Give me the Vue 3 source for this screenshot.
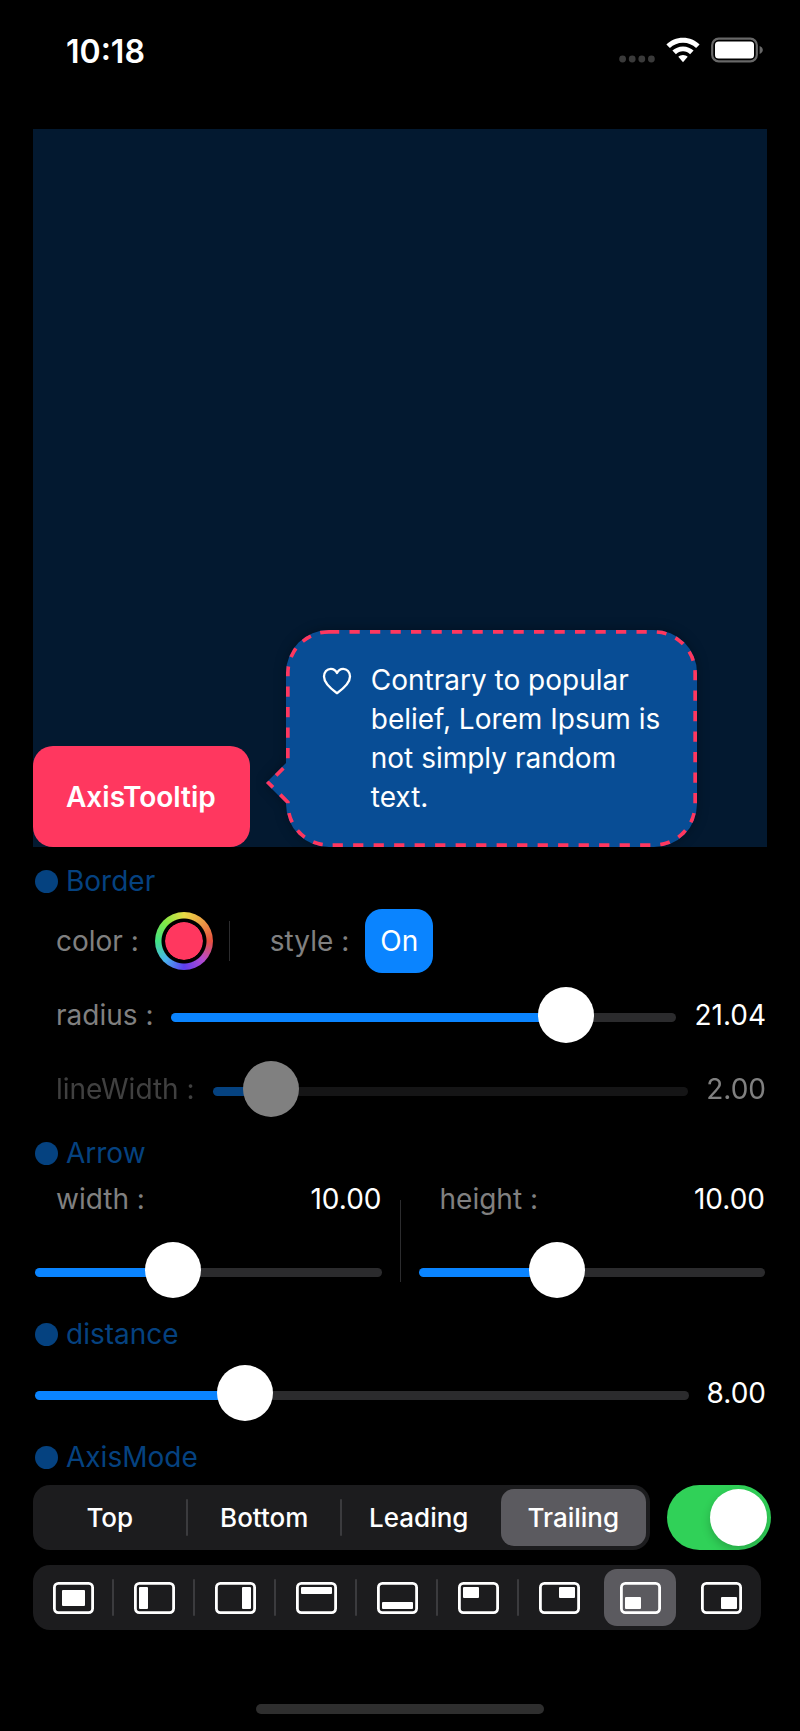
<script setup>
import { reactive, ref } from 'vue'

const border = reactive({ color: '#ff375f', styled: true })

const sliders = reactive({
  radius: { value: 21.04, min: 0, max: 25.8 },
  lineWidth: { value: 2, min: 1, max: 15 },
  width: { value: 10, min: 0, max: 26.4 },
  height: { value: 10, min: 0, max: 26.4 },
  distance: { value: 8, min: 0, max: 26.2 },
})

const ratio = (s) => ({ '--ratio': (s.value - s.min) / (s.max - s.min) })
const fixed = (s) => Number(s.value).toFixed(2)

const sides = ['Top', 'Bottom', 'Leading', 'Trailing']
const side = ref('Trailing')
const axisEnabled = ref(true)

const places = [
  { name: 'center', x: 9, y: 8, w: 23, h: 16 },
  { name: 'left', x: 5, y: 5, w: 9, h: 22 },
  { name: 'right', x: 27, y: 5, w: 9, h: 22 },
  { name: 'top', x: 5, y: 5, w: 31, h: 7 },
  { name: 'bottom', x: 5, y: 20, w: 31, h: 7 },
  { name: 'top left', x: 5, y: 5, w: 16, h: 11 },
  { name: 'top right', x: 20, y: 5, w: 16, h: 11 },
  { name: 'bottom left', x: 5, y: 15, w: 16, h: 12 },
  { name: 'bottom right', x: 20, y: 15, w: 16, h: 12 },
]
const place = ref('bottom left')

// Dividers next to the selected segment are hidden.
const dividerShown = (list, index, selected) =>
  list[index] !== selected && list[index - 1] !== selected
const placeNames = places.map((p) => p.name)
</script>

<template>
  <div class="screen">
    <header class="status">
      <time class="clock">10:18</time>
      <div class="indicators">
        <svg class="dots" width="36" height="8" viewBox="0 0 36 8" aria-hidden="true">
          <circle v-for="n in 4" :key="n" :cx="n * 9.6 - 6" cy="4" r="3.4" />
        </svg>
        <svg width="34" height="26" viewBox="0 0 34 26" aria-hidden="true">
          <path d="M17 0.8C23.6 0.8 29.4 3.3 33.6 7.5L30.1 11.1C26.7 7.8 22.1 5.8 17 5.8S7.3 7.8 3.9 11.1L0.4 7.5C4.6 3.3 10.4 0.8 17 0.8Z" fill="#fff" />
          <path d="M17 9.4C21.2 9.4 24.9 11 27.6 13.6L24.1 17.2C22.3 15.4 19.8 14.3 17 14.3S11.7 15.4 9.9 17.2L6.4 13.6C9.1 11 12.8 9.4 17 9.4Z" fill="#fff" />
          <path d="M17 17.9C18.8 17.9 20.5 18.6 21.7 19.8L17 25.2L12.3 19.8C13.5 18.6 15.2 17.9 17 17.9Z" fill="#fff" />
        </svg>
        <svg width="52" height="26" viewBox="0 0 52 26" aria-hidden="true">
          <rect x="1.2" y="1.7" width="44.6" height="22.6" rx="6.5" fill="none" stroke="#686868" stroke-width="2.2" />
          <rect x="4" y="4.5" width="39" height="17" rx="3.5" fill="#fff" />
          <path d="M48.6 9C50.6 9.8 51.8 11.2 51.8 13S50.6 16.2 48.6 17Z" fill="#686868" />
        </svg>
      </div>
    </header>

    <main class="content">
      <section class="stage">
        <button class="anchor" type="button">AxisTooltip</button>
        <div class="tooltip" role="tooltip">
          <svg class="bubble" viewBox="0 0 431 217" preserveAspectRatio="none" aria-hidden="true">
            <defs>
              <clipPath id="bubble-shape">
                <path d="M63 0H388A43 43 0 0 1 431 43V174A43 43 0 0 1 388 217H63A43 43 0 0 1 20 174V173L0 153L20 133V43A43 43 0 0 1 63 0Z" />
              </clipPath>
            </defs>
            <g clip-path="url(#bubble-shape)">
              <rect width="431" height="217" fill="#084d95" />
              <path
                v-if="border.styled"
                d="M63 0H388A43 43 0 0 1 431 43V174A43 43 0 0 1 388 217H63A43 43 0 0 1 20 174V173L0 153L20 133V43A43 43 0 0 1 63 0"
                fill="none"
                :stroke="border.color"
                stroke-width="7.4"
                stroke-dasharray="10.25 10.25"
              />
            </g>
          </svg>
          <svg class="heart" width="32" height="30" viewBox="0 0 32 30" aria-hidden="true">
            <path d="M16 27.2C10 23 3 17.4 3 10.6C3 6 6 2.8 9.8 2.8C12.6 2.8 14.8 4.4 16 7C17.2 4.4 19.4 2.8 22.2 2.8C26 2.8 29 6 29 10.6C29 17.4 22 23 16 27.2Z" fill="none" stroke="#fff" stroke-width="2.3" stroke-linejoin="round" />
          </svg>
          <p class="message">Contrary to popular belief, Lorem Ipsum is not simply random text.</p>
        </div>
      </section>

      <section class="group">
        <h2 class="heading">Border</h2>
        <div class="row style-row">
          <label class="name" for="border-color">color :</label>
          <span class="well"><input id="border-color" v-model="border.color" type="color" /></span>
          <span class="rule"></span>
          <label class="name style-name" for="border-style">style :</label>
          <button id="border-style" class="on" type="button" @click="border.styled = !border.styled">
            {{ border.styled ? 'On' : 'Off' }}
          </button>
        </div>
        <div class="row radius-row">
          <label class="name" for="radius">radius :</label>
          <input id="radius" v-model="sliders.radius.value" class="slider" type="range" step="0.01" :min="sliders.radius.min" :max="sliders.radius.max" :style="ratio(sliders.radius)" />
          <output for="radius">{{ fixed(sliders.radius) }}</output>
        </div>
        <div class="row line-row">
          <label class="name" for="line-width">lineWidth :</label>
          <input id="line-width" v-model="sliders.lineWidth.value" disabled class="slider" type="range" step="0.01" :min="sliders.lineWidth.min" :max="sliders.lineWidth.max" :style="ratio(sliders.lineWidth)" />
          <output for="line-width">{{ fixed(sliders.lineWidth) }}</output>
        </div>
      </section>

      <section class="group">
        <h2 class="heading">Arrow</h2>
        <div class="pair">
          <div class="half">
            <div class="caption">
              <label class="name" for="arrow-width">width :</label>
              <output for="arrow-width">{{ fixed(sliders.width) }}</output>
            </div>
            <input id="arrow-width" v-model="sliders.width.value" class="slider" type="range" step="0.01" :min="sliders.width.min" :max="sliders.width.max" :style="ratio(sliders.width)" />
          </div>
          <span class="pair-rule"></span>
          <div class="half">
            <div class="caption">
              <label class="name" for="arrow-height">height :</label>
              <output for="arrow-height">{{ fixed(sliders.height) }}</output>
            </div>
            <input id="arrow-height" v-model="sliders.height.value" class="slider" type="range" step="0.01" :min="sliders.height.min" :max="sliders.height.max" :style="ratio(sliders.height)" />
          </div>
        </div>
      </section>

      <section class="group">
        <h2 id="distance-title" class="heading">distance</h2>
        <div class="row distance-row">
          <input id="distance" v-model="sliders.distance.value" aria-labelledby="distance-title" class="slider" type="range" step="0.01" :min="sliders.distance.min" :max="sliders.distance.max" :style="ratio(sliders.distance)" />
          <output for="distance">{{ fixed(sliders.distance) }}</output>
        </div>
      </section>

      <section class="group">
        <h2 id="axis-title" class="heading">AxisMode</h2>
        <div class="axis-row">
          <div class="segments" role="radiogroup" aria-labelledby="axis-title">
            <template v-for="(s, i) in sides" :key="s">
              <span v-if="i" class="divider" :class="{ shown: dividerShown(sides, i, side) }"></span>
              <label class="segment" :class="{ selected: s === side }">
                <input v-model="side" type="radio" name="side" :value="s" />{{ s }}
              </label>
            </template>
          </div>
          <input v-model="axisEnabled" class="switch" type="checkbox" role="switch" aria-labelledby="axis-title" />
        </div>
        <div class="segments places" role="radiogroup" aria-label="Placement">
          <template v-for="(p, i) in places" :key="p.name">
            <span v-if="i" class="divider" :class="{ shown: dividerShown(placeNames, i, place) }"></span>
            <label class="segment" :class="{ selected: p.name === place }">
              <input v-model="place" type="radio" name="place" :value="p.name" :aria-label="p.name" />
              <svg width="41" height="32" viewBox="0 0 41 32" aria-hidden="true">
                <rect x="1.4" y="1.4" width="38.2" height="29.2" rx="4" fill="none" stroke="#fff" stroke-width="2.8" />
                <rect :x="p.x" :y="p.y" :width="p.w" :height="p.h" rx="1" fill="#fff" />
              </svg>
            </label>
          </template>
        </div>
      </section>
    </main>

    <div class="home"></div>
  </div>
</template>

<style>
html,
body {
  background: #000;
}
</style>

<style scoped>
.screen {
  box-sizing: border-box;
  min-height: 100vh;
  padding-bottom: 17px;
  display: flex;
  flex-direction: column;
  background: #000;
  color: #fff;
  font-family: Inter, "Liberation Sans", sans-serif;
  font-size: 28px;
  line-height: 36px;
}
.status {
  display: flex;
  justify-content: space-between;
  align-items: flex-start;
  padding: 32px 37px 57px 66px;
}
.clock {
  font-size: 32px;
  line-height: 40px;
  font-weight: 600;
}
.indicators {
  display: flex;
  align-items: center;
  gap: 11px;
  padding-top: 5px;
}
.dots {
  margin-top: 17px;
  fill: #3a3a3a;
}
.content {
  padding: 0 33px;
}
.stage {
  display: flex;
  align-items: flex-end;
  aspect-ratio: 734 / 718;
  background: #031930;
}
button {
  border: 0;
  padding: 0;
  color: #fff;
  font: inherit;
  cursor: pointer;
}
.anchor {
  flex: none;
  padding: 33px 34px 31px 33px;
  border-radius: 20px;
  background: #ff375f;
  font-weight: 600;
  line-height: 37px;
}
.tooltip {
  position: relative;
  box-sizing: border-box;
  flex: 0 1 411px;
  margin-left: 36px;
  padding: 31px 32px 30px 35px;
  display: flex;
  gap: 18px;
}
.bubble {
  position: absolute;
  top: 0;
  left: -20px;
  width: calc(100% + 20px);
  height: 100%;
  filter: drop-shadow(0 0 6px rgba(0, 0, 0, 0.3));
}
.heart {
  position: relative;
  flex: none;
  margin-top: 5px;
}
.message {
  position: relative;
  margin: 0;
  line-height: 39px;
}
.group {
  padding: 0 2px;
  margin-top: 16px;
}
.heading {
  display: flex;
  align-items: center;
  gap: 8px;
  margin: 0;
  color: #054280;
  font-size: 28px;
  font-weight: 400;
}
.heading::before {
  content: "";
  width: 23px;
  height: 23px;
  border-radius: 50%;
  background: currentColor;
}
.row {
  display: flex;
  align-items: center;
  gap: 18px;
  margin-right: -1px;
}
.name {
  padding-left: 21px;
  color: #808080;
}
.style-row {
  gap: 16px;
  margin-top: 10px;
}
.well {
  display: flex;
  align-items: center;
  justify-content: center;
  width: 58px;
  height: 58px;
  border-radius: 50%;
  background:
    radial-gradient(circle, #000 22px, transparent 23px),
    conic-gradient(#e8dc45, #ec9a45 45deg, #e8503f 90deg, #b44bd0 135deg, #5d3ff0 180deg, #48b4ee 225deg, #42e283 270deg, #82e845 315deg, #e8dc45);
}
.well input {
  appearance: none;
  width: 38px;
  height: 38px;
  padding: 0;
  border: 0;
  border-radius: 50%;
  background: none;
  overflow: hidden;
}
.well input::-webkit-color-swatch-wrapper {
  padding: 0;
}
.well input::-webkit-color-swatch {
  border: 0;
  border-radius: 50%;
}
.rule {
  width: 1px;
  height: 40px;
  background: #2c2c2e;
}
.style-name {
  padding-left: 24px;
}
.on {
  min-width: 68px;
  height: 64px;
  border-radius: 17px;
  background: #0a84ff;
}
.radius-row {
  margin-top: 12px;
}
.line-row {
  margin-top: 14px;
  opacity: 0.5;
}
.slider {
  appearance: none;
  box-sizing: border-box;
  flex: 1;
  min-width: 0;
  width: 100%;
  height: 60px;
  margin: 0;
  padding: 4px 0 0;
  background: none;
}
.slider::-webkit-slider-runnable-track {
  height: 9px;
  border-radius: 5px;
  background: linear-gradient(
    90deg,
    #0a84ff calc(var(--ratio) * (100% - 56px) + 28px),
    #2b2b2d calc(var(--ratio) * (100% - 56px) + 28px)
  );
}
.slider::-webkit-slider-thumb {
  appearance: none;
  width: 56px;
  height: 56px;
  margin-top: -26px;
  border-radius: 50%;
  background: #fff;
}
.pair {
  display: flex;
  gap: 18px;
  margin-top: 10px;
}
.half {
  flex: 1;
  display: flex;
  flex-direction: column;
  gap: 23px;
  min-width: 0;
}
.half .slider {
  flex: none;
}
.caption {
  display: flex;
  justify-content: space-between;
}
.pair-rule {
  width: 1px;
  margin: 19px 0 18px;
  background: #2c2c2e;
}
.distance-row {
  margin-top: 11px;
}
.axis-row {
  display: flex;
  gap: 17px;
  margin: 10px -6px 15px -2px;
}
.segments {
  flex: 1;
  display: flex;
  align-items: center;
  height: 65px;
  box-sizing: border-box;
  padding: 4px;
  border-radius: 17px;
  background: #1c1c1e;
  font-size: 26px;
  font-weight: 500;
}
.places {
  margin: 0 4px 0 -2px;
}
.segment {
  flex: 1 1 0;
  min-width: 0;
  height: 100%;
  display: flex;
  align-items: center;
  justify-content: center;
  border-radius: 13px;
  cursor: pointer;
}
.segment.selected {
  background: #5b5a5f;
}
.segment input {
  appearance: none;
  width: 0;
  height: 0;
  margin: 0;
}
.divider {
  width: 2px;
  height: 37px;
  margin: 0 4px 0 3px;
  border-radius: 1px;
}
.divider.shown {
  background: #3b3b3e;
}
.switch {
  appearance: none;
  flex: none;
  box-sizing: border-box;
  display: flex;
  width: 104px;
  height: 65px;
  margin: 0;
  padding: 4px;
  border-radius: 33px;
  background: #39393d;
  cursor: pointer;
}
.switch::before {
  content: "";
  width: 57px;
  height: 57px;
  border-radius: 50%;
  background: #fff;
  box-shadow: 0 4px 10px rgba(0, 0, 0, 0.2);
}
.switch:checked {
  justify-content: flex-end;
  background: #30d158;
}
.home {
  width: 36%;
  height: 10px;
  margin: auto auto 0;
  border-radius: 5px;
  background: #2e2e2e;
}
</style>
